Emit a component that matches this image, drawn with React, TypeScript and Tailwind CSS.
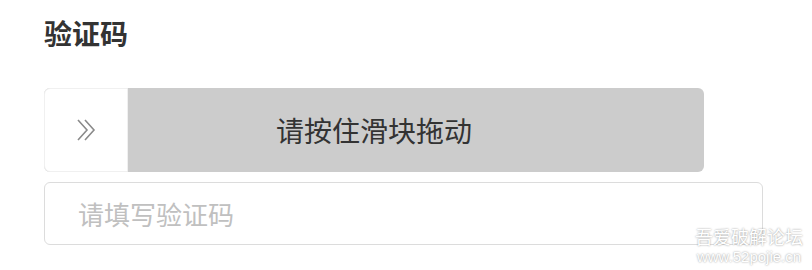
export default function App() {
  return (
    <div
      className="relative w-[812px] h-[270px] bg-white pl-[44px] pt-[19px]"
      style={{ fontFamily: '"Noto Sans CJK SC", "Noto Sans", sans-serif' }}
    >
      {/* Title */}
      <div className="text-[28px] leading-none font-bold text-[#333333]">验证码</div>

      {/* Slider */}
      <div className="relative mt-[41px] w-[660px] h-[84px] rounded-[6px] bg-[#cccccc] flex items-center justify-center">
        <span className="text-[28px] leading-none text-[#333333]">请按住滑块拖动</span>
        <div className="absolute left-0 top-0 h-[84px] w-[84px] rounded-l-[6px] bg-white border border-[#f0f0f0] flex items-center justify-center">
          <svg width="24" height="26" viewBox="0 0 24 26" fill="none" stroke="#8a8a8a" strokeWidth="1.6">
            <path d="M4 3 L13 13 L4 23" />
            <path d="M11 3 L20 13 L11 23" />
          </svg>
        </div>
      </div>

      {/* Input */}
      <div className="mt-[10px] w-[719px] h-[63px] rounded-[6px] border border-[#dcdcdc] flex items-center pl-[33px]">
        <span className="text-[26px] leading-none text-[#c0c0c0]">请填写验证码</span>
      </div>

      {/* Watermark */}
      <div className="absolute right-[9px] bottom-[6px] flex flex-col items-center gap-[3px] text-white [text-shadow:0_0_2px_#8a8a8a]">
        <span className="text-[18px] leading-[19px]">吾爱破解论坛</span>
        <span className="text-[15px] leading-[15px]" style={{ fontFamily: '"Liberation Sans", sans-serif' }}>
          www.52pojie.cn
        </span>
      </div>
    </div>
  );
}
